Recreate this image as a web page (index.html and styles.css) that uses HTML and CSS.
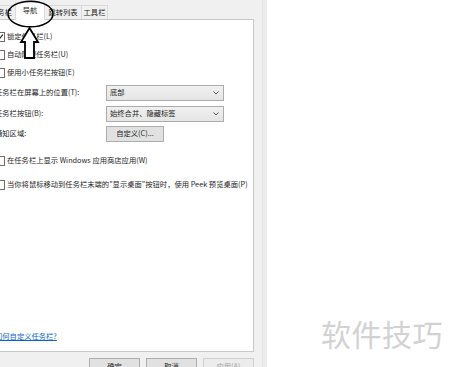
FILE: index.html
```html
<!DOCTYPE html>
<html lang="zh-CN">
<head>
<meta charset="utf-8">
<title>任务栏属性 - 导航</title>
<link rel="stylesheet" href="styles.css">
</head>
<body>
<div class="screen">
  <div class="dialog">
    <div class="tabs">
      <div class="tab tab-1">任务栏</div>
      <div class="tab tab-sel">导航</div>
      <div class="tab tab-3">跳转列表</div>
      <div class="tab tab-4">工具栏</div>
    </div>
    <div class="panel">
      <div class="check-row r1"><span class="box checked"><svg viewBox="0 0 10 10" width="8" height="8"><polyline points="1.5,5 4,7.5 8.5,2" fill="none" stroke="#222" stroke-width="1.4"/></svg></span><span>锁定任务栏(L)</span></div>
      <div class="check-row r2"><span class="box"></span><span>自动隐藏任务栏(U)</span></div>
      <div class="check-row r3"><span class="box"></span><span>使用小任务栏按钮(E)</span></div>

      <div class="form-row f1"><span class="label">任务栏在屏幕上的位置(T):</span><div class="select"><span>底部</span><svg class="chev" viewBox="0 0 6 4" width="6" height="4"><polyline points="0.5,0.5 3,3 5.5,0.5" fill="none" stroke="#555" stroke-width="1"/></svg></div></div>
      <div class="form-row f2"><span class="label">任务栏按钮(B):</span><div class="select"><span>始终合并、隐藏标签</span><svg class="chev" viewBox="0 0 6 4" width="6" height="4"><polyline points="0.5,0.5 3,3 5.5,0.5" fill="none" stroke="#555" stroke-width="1"/></svg></div></div>
      <div class="form-row f3"><span class="label">通知区域:</span><div class="btn btn-custom">自定义(C)...</div></div>

      <div class="check-row r4"><span class="box"></span><span>在任务栏上显示 Windows 应用商店应用(W)</span></div>
      <div class="check-row r5"><span class="box"></span><span>当你将鼠标移动到任务栏末端的"显示桌面"按钮时，使用 Peek 预览桌面(P)</span></div>

      <a class="help-link" href="#">如何自定义任务栏?</a>
    </div>
    <div class="actions">
      <div class="btn btn-act">确定</div>
      <div class="btn btn-act">取消</div>
      <div class="btn btn-act disabled">应用(A)</div>
    </div>
  </div>
  <div class="watermark">软件技巧</div>
  <svg class="annot" width="70" height="62" viewBox="0 0 70 62">
    <ellipse cx="30.5" cy="14" rx="22.5" ry="12.8" fill="none" stroke="#000" stroke-width="1.5"/>
    <polygon points="29.5,28 38,42 34,42 34,58 25,58 25,42 21,42" fill="#fff" stroke="#000" stroke-width="1.8" stroke-linejoin="miter"/>
  </svg>
</div>
</body>
</html>
```

FILE: styles.css
```css
html, body {
  margin: 0;
  padding: 0;
  background: #fff;
}

.screen {
  position: relative;
  width: 450px;
  height: 367px;
  overflow: hidden;
  background: #fff;
  font-family: "Noto Sans CJK SC", "Noto Sans", sans-serif;
  font-size: 7.3px;
  color: #1e1e1e;
}

.dialog {
  box-sizing: border-box;
  width: 289px;
  height: 367px;
  margin-left: -22px;
  padding: 2px 9px 0 6px;
  background: #f0f0f0;
  display: flex;
  flex-direction: column;
  border-right: 4px solid #ececec;
  box-shadow: inset -1px 0 0 #e4e4e4;
  overflow: hidden;
}

.tabs {
  flex: none;
  height: 17px;
  display: flex;
  align-items: flex-end;
  padding-left: 2px;
  position: relative;
  z-index: 2;
}

.tab {
  box-sizing: border-box;
  height: 14px;
  border: 1px solid #d9d9d9;
  border-bottom: none;
  background: #f0f0f0;
  display: flex;
  align-items: center;
  justify-content: center;
  white-space: nowrap;
  line-height: 1;
}

.tab-1 { width: 30px; }
.tab-3 { width: 38px; }
.tab-4 { width: 26px; border-left: none; }

.tab-sel {
  width: 30px;
  height: 18px;
  margin: 0 -1px -1px;
  background: #fff;
  position: relative;
  z-index: 3;
  padding-bottom: 1px;
}

.panel {
  flex: none;
  box-sizing: border-box;
  height: 333px;
  border: 1px solid #c9c9c9;
  background: #fff;
  padding: 0 0 10px 10px;
  display: flex;
  flex-direction: column;
  position: relative;
  z-index: 1;
}

.check-row {
  display: flex;
  align-items: center;
  height: 12px;
  white-space: nowrap;
  line-height: 1;
}

.box {
  box-sizing: border-box;
  width: 10px;
  height: 10px;
  border: 1px solid #6d6d6d;
  background: #fff;
  margin-right: 2px;
  display: flex;
  align-items: center;
  justify-content: center;
  flex: none;
}

.r1 { margin-top: 11px; }
.r2 { margin-top: 6px; }
.r3 { margin-top: 6px; }
.r4 { margin-top: 13px; }
.r5 { margin-top: 12px; }

.form-row {
  display: flex;
  align-items: center;
  white-space: nowrap;
  line-height: 1;
}

.f1 { margin-top: 6px; }
.f2 { margin-top: 5px; }
.f3 { margin-top: 4px; }

.label {
  width: 111px;
  flex: none;
}

.select {
  box-sizing: border-box;
  width: 118px;
  height: 16px;
  border: 1px solid #acacac;
  background: linear-gradient(#f0f0f0, #e5e5e5);
  display: flex;
  align-items: center;
  justify-content: space-between;
  padding: 0 4px 0 3px;
}

.btn {
  box-sizing: border-box;
  height: 16px;
  border: 1px solid #adadad;
  background: #e1e1e1;
  display: flex;
  align-items: center;
  justify-content: center;
  white-space: nowrap;
  line-height: 1;
}

.btn-custom { width: 58px; }

.help-link {
  margin-top: auto;
  color: #0b64c8;
  text-decoration: underline;
  line-height: 10px;
  align-self: flex-start;
}

.actions {
  flex: none;
  display: flex;
  justify-content: flex-end;
  gap: 6px;
  margin-top: 6px;
}

.btn-act {
  width: 51px;
  height: 18px;
  align-items: flex-start;
  padding-top: 4px;
}

.btn-act.disabled {
  color: #a0a0a0;
  border-color: #cfcfcf;
  background: #ececec;
}

.watermark {
  position: absolute;
  left: 321px;
  top: 311px;
  font-size: 30px;
  line-height: 44px;
  color: #d2d2d2;
  letter-spacing: 0.5px;
  white-space: nowrap;
}

.annot {
  position: absolute;
  left: 0;
  top: 0;
  z-index: 5;
}
```
